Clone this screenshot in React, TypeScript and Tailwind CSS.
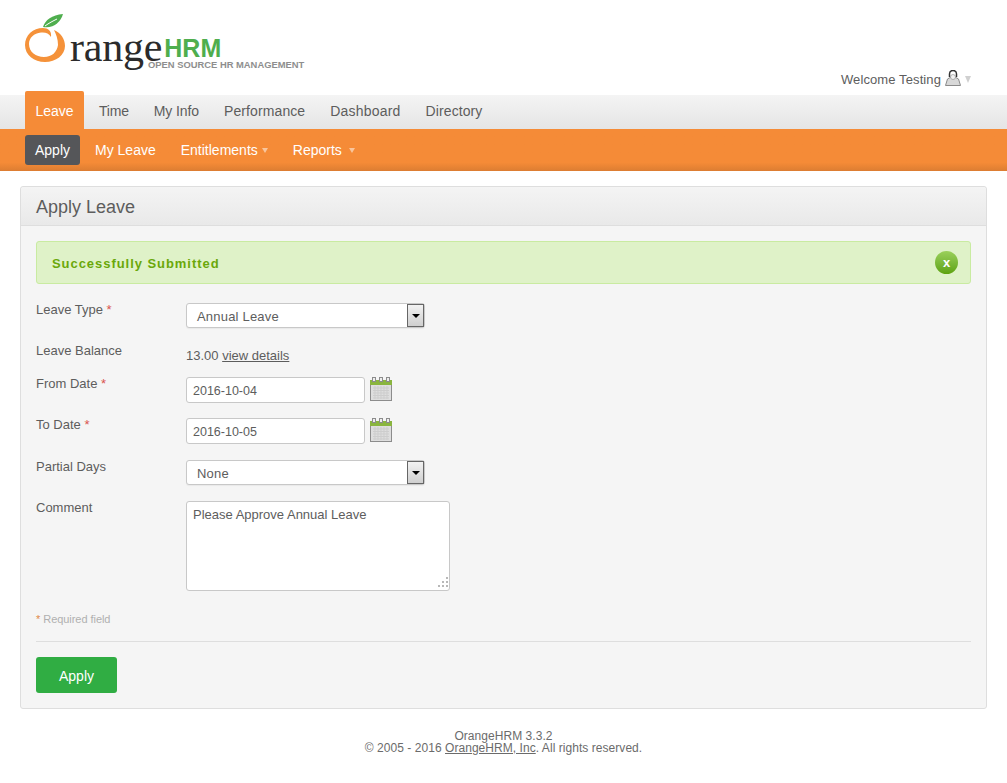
import React from "react";

const LogoMark = () => (
  <svg width="42" height="50" viewBox="0 0 42 50" className="shrink-0">
    <path d="M18 13 C20 6 27 1 38 0 C36 8 28 15 18 13 Z" fill="#4fae4e" />
    <path d="M20 12 C24 9 28 7 32 5" stroke="#fff" strokeWidth="1" fill="none" />
    <path
      d="M29 16 C36 19 40 25 40 32 C40 41 31 48 20 48 C9 48 0 41 0 31 C0 21 8 14 18 14 C23 14 27 17 26 23 C24 19 20 18 16 18.500 C9 19 4 24 4 30 C4 38 11 43 19 43 C27 43 32 38 33 31 C33 25 31 20 29 16 Z"
      fill="#f5923a"
    />
  </svg>
);

const Calendar = () => (
  <svg width="22" height="24" viewBox="0 0 22 24" className="shrink-0">
    <rect x="0.5" y="3.5" width="21" height="20" fill="#dedede" stroke="#8c8c8c" />
    <rect x="0" y="3" width="22" height="5" fill="#8ab53f" />
    <path
      d="M3 11h16M3 13.500h16M3 16h16M3 18.500h16M3 21h16M5 9v13M8 9v13M11 9v13M14 9v13M17 9v13"
      stroke="#cdcdcd"
      strokeWidth="1"
      fill="none"
    />
    <rect x="2.500" y="0.500" width="3" height="4" fill="#eee" stroke="#8c8c8c" />
    <rect x="9.500" y="0.500" width="3" height="4" fill="#eee" stroke="#8c8c8c" />
    <rect x="16.500" y="0.500" width="3" height="4" fill="#eee" stroke="#8c8c8c" />
  </svg>
);

const UserIcon = () => (
  <svg width="16" height="16" viewBox="0 0 16 16" className="shrink-0">
    <path d="M0.500 15.500 L2.500 9 L6 7 H10 L13.500 9 L15.500 15.500 Z" fill="#d8d8d8" stroke="#8a8a8a" />
    <path d="M4.500 7 V4 C4.500 1 6 0.500 8 0.500 C10 0.500 11.500 1 11.500 4 V7" fill="none" stroke="#333" strokeWidth="1.500" />
    <circle cx="8" cy="7" r="2.500" fill="#f2f2f2" stroke="#777" strokeWidth="0.500" />
  </svg>
);

const Select = ({ value }: { value: string }) => (
  <div className="flex h-[25px] w-[239px] items-center rounded-[3px] border border-[#c8c8c8] bg-white pl-[10px] shadow-[0_1px_1px_rgba(0,0,0,0.05)]">
    <span className="flex-1 pt-[3px] text-[13px] tracking-[0.2px]">{value}</span>
    <div className="flex h-[23px] w-[17px] items-center justify-center border border-[#666] bg-gradient-to-b from-[#f2f2f2] to-[#cfcfcf]">
      <div className="h-0 w-0 border-x-[4px] border-t-[4px] border-x-transparent border-t-black" />
    </div>
  </div>
);

const DateInput = ({ value }: { value: string }) => (
  <div className="flex items-start gap-[5px]">
    <input
      readOnly
      value={value}
      className="h-[26px] w-[179px] rounded-[3px] border border-[#c8c8c8] bg-white px-[6px] pt-[2px] text-[12.5px] text-[#5d5d5d] outline-none"
    />
    <Calendar />
  </div>
);

const Label = ({ text, required }: { text: string; required?: boolean }) => (
  <div className="w-[150px] shrink-0 text-[13px] leading-[14px]">
    {text}
    {required && <span className="text-[#d9534f]"> *</span>}
  </div>
);

const topMenu = [
  { label: "Time", className: "tracking-[-0.2px]" },
  { label: "My Info", className: "tracking-[-0.1px]" },
  { label: "Performance", className: "tracking-[0.1px]" },
  { label: "Dashboard", className: "tracking-[0.2px]" },
  { label: "Directory", className: "tracking-[0.1px]" },
];

export default function App() {
  return (
    <div
      className="h-[783px] overflow-hidden bg-white text-[#5d5d5d]"
      style={{ fontFamily: '"Liberation Sans", Arial, sans-serif' }}
    >
      <header className="flex h-[95px] justify-between pl-[25px] pr-[36px]">
        <div className="flex items-start pt-[14px]">
          <LogoMark />
          <div className="ml-[3px] pt-[13px]">
            <div className="flex items-baseline">
              <span
                className="text-[42px] leading-[40px] tracking-[-0.2px] text-[#2b2b2b]"
                style={{ fontFamily: '"Liberation Serif", serif' }}
              >
                range
              </span>
              <span className="ml-[2px] -translate-y-[4px] text-[25px] font-bold leading-[18px] text-[#4fae4e]">
                HRM
              </span>
            </div>
            <div className="-mt-[7px] ml-[78px] whitespace-nowrap text-[9.4px] font-bold leading-[10px] text-[#8e8e8e]">
              OPEN SOURCE HR MANAGEMENT
            </div>
          </div>
        </div>
        <div className="flex items-center gap-[4px] self-end pb-[6px] text-[13px] tracking-[0.1px]">
          <span className="pt-[3px]">Welcome Testing</span>
          <UserIcon />
          <div className="mt-[4px] h-0 w-0 border-x-[3.5px] border-t-[7px] border-x-transparent border-t-[#d0d0d0]" />
        </div>
      </header>

      <nav className="flex h-[34px] bg-gradient-to-b from-[#f4f4f4] to-[#e5e5e5] pl-[25px]">
        <div className="z-10 -mt-[4px] flex h-[38px] w-[59px] items-center justify-center rounded-t-[2px] bg-[#f58b37] pt-[2px] text-[14px] text-white">
          Leave
        </div>
        <div className="ml-[5px] flex gap-[5px]">
          {topMenu.map((item) => (
            <div key={item.label} className={`flex items-center px-[10px] pb-[2px] text-[14px] ${item.className}`}>
              {item.label}
            </div>
          ))}
        </div>
      </nav>

      <nav className="flex h-[42px] items-start gap-[5px] bg-gradient-to-b from-[#f58b37] from-80% to-[#dc7d32] pl-[25px] pt-[6px] text-[14px] text-white">
        <div className="flex h-[30px] items-center rounded-[3px] bg-[#555659] px-[10px]">Apply</div>
        <div className="flex h-[30px] items-center px-[10px]">My Leave</div>
        <div className="flex h-[30px] items-center gap-[4px] px-[10px]">
          Entitlements
          <div className="h-0 w-0 border-x-[3px] border-t-[5px] border-x-transparent border-t-[#f9c59c]" />
        </div>
        <div className="flex h-[30px] items-center gap-[7px] px-[10px]">
          Reports
          <div className="h-0 w-0 border-x-[3px] border-t-[5px] border-x-transparent border-t-[#f9c59c]" />
        </div>
      </nav>

      <main className="mx-[20px] mt-[15px] h-[523px] rounded-[3px] border border-[#dedede] bg-[#f5f5f5]">
        <div className="flex h-[39px] items-center rounded-t-[3px] border-b border-[#dedede] bg-gradient-to-b from-[#f4f4f4] to-[#e9e9e9] px-[15px] pt-[2px] text-[18px]">
          Apply Leave
        </div>
        <div className="px-[15px]">
          <div className="mt-[15px] flex h-[43px] items-center justify-between rounded-[3px] border border-[#c9eba1] bg-[#dff2c8] pl-[15px] pr-[12px]">
            <span className="pt-[3px] text-[13px] font-bold tracking-[0.95px] text-[#6aa80a]">
              Successfully Submitted
            </span>
            <div className="flex h-[23px] w-[23px] items-center justify-center rounded-full bg-gradient-to-b from-[#9ad05a] to-[#5ea30a] text-[13px] font-bold leading-none text-white">
              x
            </div>
          </div>

          <div className="mt-[19px] flex">
            <Label text="Leave Type" required />
            <Select value="Annual Leave" />
          </div>

          <div className="mt-[16px] flex">
            <Label text="Leave Balance" />
            <div className="mt-[6px] text-[13px] leading-[12px]">
              13.00 <span className="underline">view details</span>
            </div>
          </div>

          <div className="mt-[15px] flex">
            <Label text="From Date" required />
            <DateInput value="2016-10-04" />
          </div>

          <div className="mt-[15px] flex">
            <Label text="To Date" required />
            <DateInput value="2016-10-05" />
          </div>

          <div className="mt-[16px] flex">
            <Label text="Partial Days" />
            <Select value="None" />
          </div>

          <div className="mt-[16px] flex">
            <Label text="Comment" />
            <div className="relative">
              <textarea
                readOnly
                value="Please Approve Annual Leave"
                className="block h-[90px] w-[264px] resize-none rounded-[3px] border border-[#c8c8c8] bg-white px-[6px] py-[5px] text-[13px] leading-[16px] text-[#5d5d5d] outline-none"
              />
              <svg width="12" height="12" viewBox="0 0 12 12" className="absolute bottom-[2px] right-[1px]">
                <g fill="#b8b8b8">
                  <rect x="9" y="0" width="2" height="2" />
                  <rect x="5" y="4" width="2" height="2" />
                  <rect x="9" y="4" width="2" height="2" />
                  <rect x="1" y="8" width="2" height="2" />
                  <rect x="5" y="8" width="2" height="2" />
                  <rect x="9" y="8" width="2" height="2" />
                </g>
              </svg>
            </div>
          </div>

          <div className="mt-[21px] text-[11px] leading-[14px] tracking-[-0.05px] text-[#b0b0b0]">
            <span className="text-[#e08a4a]">*</span> Required field
          </div>
          <div className="mt-[15px] border-t border-[#dedede]" />
          <button className="mt-[15px] h-[36px] w-[81px] rounded-[3px] bg-[#30ad43] pt-[2px] text-[14px] text-white">
            Apply
          </button>
        </div>
      </main>

      <footer className="mt-[21px] text-center text-[12px] leading-[12px] tracking-[0.05px] text-[#6b6b6b]">
        <div>OrangeHRM 3.3.2</div>
        <div>
          © 2005 - 2016 <span className="underline">OrangeHRM, Inc</span>. All rights reserved.
        </div>
      </footer>
    </div>
  );
}
